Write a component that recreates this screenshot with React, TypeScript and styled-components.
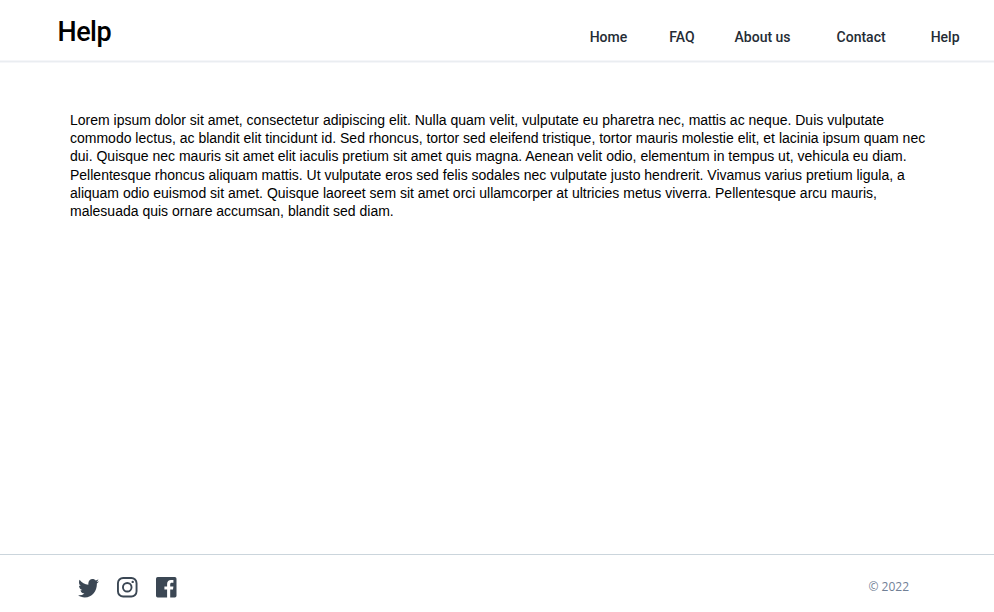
import React from "react";
import styled, { createGlobalStyle } from "styled-components";

const GlobalStyle = createGlobalStyle`
  * { box-sizing: border-box; }
  body { margin: 0; background: #fff; overflow: hidden; }
`;

const Page = styled.div`
  display: flex;
  flex-direction: column;
  height: 612px;
`;

const Header = styled.header`
  display: flex;
  justify-content: space-between;
  height: 62px;
  padding: 0 34.5px 0 57.5px;
  border-bottom: 1px solid #eaedf1;
  box-shadow: 0 1px 0 #f5f6f9, inset 0 -1px 0 #f5f6f9;
  font-family: Roboto, sans-serif;
`;

const Title = styled.h1`
  margin: 0;
  padding-top: 16px;
  font-size: 27px;
  line-height: 32px;
  font-weight: 500;
  letter-spacing: -0.5px;
  color: #000;
`;

const Nav = styled.nav`
  display: flex;
  padding-top: 28px;
`;

const NavLink = styled.a<{ $gap: number }>`
  margin-left: ${(p) => p.$gap}px;
  font-size: 14px;
  line-height: 18px;
  font-weight: 500;
  color: #252c35;
  text-decoration: none;
`;

const Main = styled.main`
  flex: 1;
  padding: 49px 60px 0 70px;
`;

const Paragraph = styled.p`
  margin: 0;
  font: 14px/18.2px "Liberation Sans", Arial, sans-serif;
  color: #000;
`;

const Footer = styled.footer`
  display: flex;
  justify-content: space-between;
  align-items: flex-start;
  height: 58px;
  padding: 20px 85px 0 78.6px;
  border-top: 1px solid #cbd5dc;
`;

const Socials = styled.div`
  display: flex;
  align-items: flex-end;
  gap: 18.6px;
  padding-top: 1.7px;
  color: #3b4754;
`;

const Icon = styled.svg<{ $w: number; $h: number }>`
  display: block;
  overflow: visible;
  width: ${(p) => p.$w}px;
  height: ${(p) => p.$h}px;
  fill: currentColor;
`;

const Copyright = styled.span`
  font: 12px/24px "Open Sans", sans-serif;
  color: #718096;
`;

const links = [
  { label: "Home", gap: 0 },
  { label: "FAQ", gap: 42 },
  { label: "About us", gap: 40 },
  { label: "Contact", gap: 46 },
  { label: "Help", gap: 45 },
];

export default function App() {
  return (
    <>
      <GlobalStyle />
      <Page>
        <Header>
          <Title>Help</Title>
          <Nav>
            {links.map((l) => (
              <NavLink key={l.label} $gap={l.gap}>{l.label}</NavLink>
            ))}
          </Nav>
        </Header>
        <Main>
          <Paragraph>
            Lorem ipsum dolor sit amet, consectetur adipiscing elit. Nulla quam velit, vulputate eu pharetra nec, mattis ac neque. Duis vulputate commodo lectus, ac blandit elit tincidunt id. Sed rhoncus, tortor sed eleifend tristique, tortor mauris molestie elit, et lacinia ipsum quam nec dui. Quisque nec mauris sit amet elit iaculis pretium sit amet quis magna. Aenean velit odio, elementum in tempus ut, vehicula eu diam. Pellentesque rhoncus aliquam mattis. Ut vulputate eros sed felis sodales nec vulputate justo hendrerit. Vivamus varius pretium ligula, a aliquam odio euismod sit amet. Quisque laoreet sem sit amet orci ullamcorper at ultricies metus viverra. Pellentesque arcu mauris, malesuada quis ornare accumsan, blandit sed diam.
          </Paragraph>
        </Main>
        <Footer>
          <Socials>
            <Icon $w={20} $h={18.4} viewBox="2.42 4 20.04 17" preserveAspectRatio="none" aria-label="Twitter">
              <path d="M22.46 6c-.77.35-1.6.58-2.46.69.88-.53 1.56-1.37 1.88-2.38-.83.5-1.75.85-2.72 1.05C18.37 4.5 17.26 4 16 4c-2.35 0-4.27 1.92-4.27 4.29 0 .34.04.67.11.98C8.28 9.09 5.11 7.38 3 4.79c-.37.63-.58 1.37-.58 2.15 0 1.49.75 2.81 1.91 3.56-.71 0-1.37-.2-1.95-.5v.03c0 2.08 1.48 3.82 3.44 4.21a4.22 4.22 0 0 1-1.93.07 4.28 4.28 0 0 0 4 2.98 8.521 8.521 0 0 1-5.33 1.84c-.34 0-.68-.02-1.02-.06C3.44 20.29 5.7 21 8.12 21 16 21 20.33 14.46 20.33 8.79c0-.19 0-.37-.01-.56.84-.6 1.56-1.36 2.14-2.23z" />
            </Icon>
            <Icon $w={20.5} $h={20.5} viewBox="0 0 20.5 20.5" aria-label="Instagram">
              <rect x="0.95" y="0.95" width="18.6" height="18.6" rx="5.2" fill="none" stroke="currentColor" strokeWidth="1.9" />
              <circle cx="10.25" cy="10.25" r="4.3" fill="none" stroke="currentColor" strokeWidth="1.9" />
              <circle cx="15.7" cy="4.9" r="1.2" />
            </Icon>
            <Icon $w={20.5} $h={20.5} viewBox="0 0 20.5 20.5" aria-label="Facebook">
              <path d="M1.7 0H18.8Q20.5 0 20.5 1.7V18.8Q20.5 20.5 18.8 20.5H14.2V12.5H17L17.4 9.4H14.2V7.5C14.2 6.4 14.6 5.8 15.8 5.8H17.4V3.1C16.9 3 16.1 2.9 15 2.9C12.6 2.9 11.1 4.3 11.1 7V9.4H8.4V12.5H11.1V20.5H1.7Q0 20.5 0 18.8V1.7Q0 0 1.7 0Z" />
            </Icon>
          </Socials>
          <Copyright>© 2022</Copyright>
        </Footer>
      </Page>
    </>
  );
}
